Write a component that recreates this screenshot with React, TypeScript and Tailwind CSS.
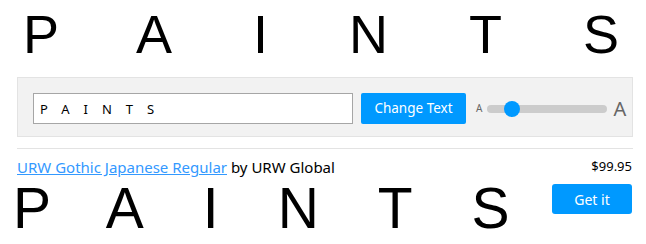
import React, { useState } from 'react';

const App: React.FC = () => {
  const [text, setText] = useState('PAINTS');
  const [draft, setDraft] = useState('PAINTS');
  const [size, setSize] = useState(20);

  return (
    <div className="w-[646px] h-[244px] overflow-hidden bg-white font-['Noto_Sans',sans-serif] text-black">
      {/* Preview */}
      <div className="pt-[7px] pl-[23px] h-[61px] whitespace-nowrap overflow-hidden font-['Liberation_Sans',Arial,sans-serif] text-[54px] leading-none tracking-[81px]">
        {text}
      </div>

      <div className="pl-[17px] pr-[13px]">
        {/* Controls panel */}
        <div className="mt-[16px] flex items-center bg-[#f2f2f2] border border-[#e3e3e3] pl-[15px] pt-[15px] pb-[12px]">
          <input
            value={draft}
            onChange={e => setDraft(e.target.value)}
            className="w-[320px] h-[31px] border border-[#a6a6a6] bg-white px-[6px] text-[13px] tracking-[14px] outline-none"
          />
          <button
            onClick={() => setText(draft)}
            className="ml-[8px] w-[105px] h-[31px] rounded-[2px] bg-[#0099ff] text-white text-[13.5px]"
          >
            Change Text
          </button>
          <span className="ml-[10px] text-[10px] text-[#666]">A</span>
          <div className="relative ml-[5px] w-[120px] h-[8px] rounded-full bg-[#cccccc]">
            <div
              className="absolute top-1/2 w-[16px] h-[16px] -translate-y-1/2 rounded-full bg-[#0099ff]"
              style={{ left: `${size - 3}px` }}
              onClick={() => setSize(size)}
            />
          </div>
          <span className="ml-[6px] text-[20px] leading-none text-[#666]">A</span>
        </div>

        {/* Listing */}
        <div className="mt-[11px] border-t border-[#e3e3e3] flex justify-between">
          <div className="min-w-0">
            <div className="pt-[8px] text-[15px] leading-[20px] whitespace-nowrap">
              <a href="#" className="text-[#3399ff] underline">URW Gothic Japanese Regular</a> by URW Global
            </div>
            <div className="mt-[3px] -ml-[4px] whitespace-nowrap font-['Liberation_Sans',Arial,sans-serif] text-[57px] leading-none tracking-[59px]">
              {text}
            </div>
          </div>
          <div className="flex flex-col items-end pt-[8px] pr-px">
            <div className="text-[13px] leading-[18px]">$99.95</div>
            <button className="mt-[9px] w-[80px] h-[30px] rounded-[3px] bg-[#0099ff] text-white text-[14px]">
              Get it
            </button>
          </div>
        </div>
      </div>
    </div>
  );
};

export default App;
